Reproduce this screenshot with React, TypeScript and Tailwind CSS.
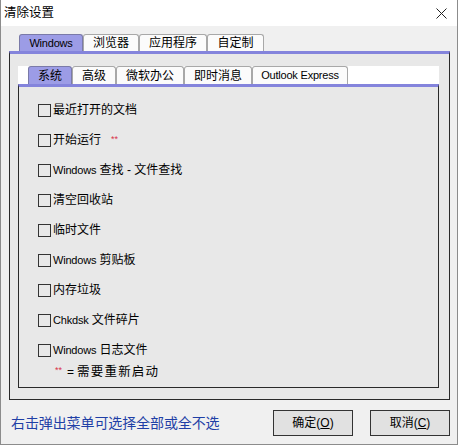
import React from "react";

const FONT = { fontFamily: '"Liberation Sans", "Noto Sans CJK SC", sans-serif' };

function Lat({ children }: { children: React.ReactNode }) {
    return <span className="text-[11px] tracking-[-0.2px]">{children}</span>;
}

const outerTabs = [
    { label: <Lat>Windows</Lat>, w: "w-[64px]", active: true },
    { label: "浏览器", w: "w-[56px]" },
    { label: "应用程序", w: "w-[68px]" },
    { label: "自定制", w: "w-[57px]" },
];

const innerTabs = [
    { label: "系统", w: "w-[44px]", active: true },
    { label: "高级", w: "w-[44px]" },
    { label: "微软办公", w: "w-[68px]" },
    { label: "即时消息", w: "w-[68px]" },
    { label: <Lat>Outlook Express</Lat>, w: "w-[96px]" },
];

const Stars = () => <span className="text-[9px] leading-none text-[#d8324a] relative -top-[2px]">**</span>;

const items: React.ReactNode[] = [
    "最近打开的文档",
    <>开始运行<span className="ml-[10px]"><Stars /></span></>,
    <><Lat>Windows</Lat> 查找 - 文件查找</>,
    "清空回收站",
    "临时文件",
    <><Lat>Windows</Lat> 剪贴板</>,
    "内存垃圾",
    <><Lat>Chkdsk</Lat> 文件碎片</>,
    <><Lat>Windows</Lat> 日志文件</>,
];

function Tab({ label, w, active }: { label: React.ReactNode; w: string; active?: boolean }) {
    return (
        <div
            className={`${w} h-full flex items-center justify-center rounded-t-[3px] border border-b-0 ${
                active ? "bg-[#9c9ce6] border-[#7a7aa8]" : "bg-[#fbfbfb] border-[#a8a8a8]"
            }`}
        >
            {label}
        </div>
    );
}

export default function App() {
    return (
        <div className="w-[458px] h-[445px] bg-[#f0f0f0] border-x border-b border-[#8c8c8c] text-[12px] text-black flex flex-col" style={FONT}>
            {/* title bar */}
            <div className="h-[26px] bg-white flex items-center justify-between pl-[3px] pr-[10px]">
                <span className="text-[12.5px]">清除设置</span>
                <svg width="11" height="11" viewBox="0 0 11 11">
                    <path d="M0.5 0.5 L10.5 10.5 M10.5 0.5 L0.5 10.5" stroke="#222" strokeWidth="1" />
                </svg>
            </div>

            <div className="pl-[8px] pr-[7px] pt-[8px]">
                {/* outer tabs */}
                <div className="h-[17px] flex pl-[10px]">
                    {outerTabs.map((t, i) => (
                        <Tab key={i} {...t} />
                    ))}
                </div>

                {/* outer panel */}
                <div className="h-[349px] bg-[#e8e8e8] border-t-[3px] border-t-[#8484dc] border-x border-b border-x-[#2a2a2a] border-b-[#2a2a2a] pl-[8px] pr-[10px] pt-[12px]">
                    {/* inner tabs strip */}
                    <div className="h-[18px] bg-white flex pl-[10px]">
                        {innerTabs.map((t, i) => (
                            <Tab key={i} {...t} />
                        ))}
                    </div>

                    {/* inner panel */}
                    <div className="h-[304px] border-t-[3px] border-t-[#8484dc] border-x border-b border-x-[#2a2a2a] border-b-[#2a2a2a] pt-[8px] pl-[19px]">
                        {items.map((it, i) => (
                            <div key={i} className="h-[30px] flex items-center">
                                <div className="w-[13px] h-[13px] border border-[#333] mr-[2px]" />
                                <span className="leading-none">{it}</span>
                            </div>
                        ))}
                        <div className="h-[14px] flex items-center pl-[17px] leading-none">
                            <Stars />
                            <span className="ml-[5px]">=</span>
                            <span className="ml-[3px] tracking-[1.2px] text-[12.5px]">需要重新启动</span>
                        </div>
                    </div>
                </div>

                {/* footer */}
                <div className="mt-[10px] h-[26px] flex items-center">
                    <span className="ml-[2px] text-[14px] text-[#1f3fa6] tracking-[-0.1px] flex-1">右击弹出菜单可选择全部或全不选</span>
                    <button className="w-[80px] h-[26px] bg-[#e1e1e1] border border-[#333] flex items-center justify-center">
                        确定(<span className="underline">O</span>)
                    </button>
                    <button className="ml-[17px] w-[80px] h-[26px] bg-[#e1e1e1] border border-[#333] flex items-center justify-center">
                        取消(<span className="underline">C</span>)
                    </button>
                </div>
            </div>
        </div>
    );
}
